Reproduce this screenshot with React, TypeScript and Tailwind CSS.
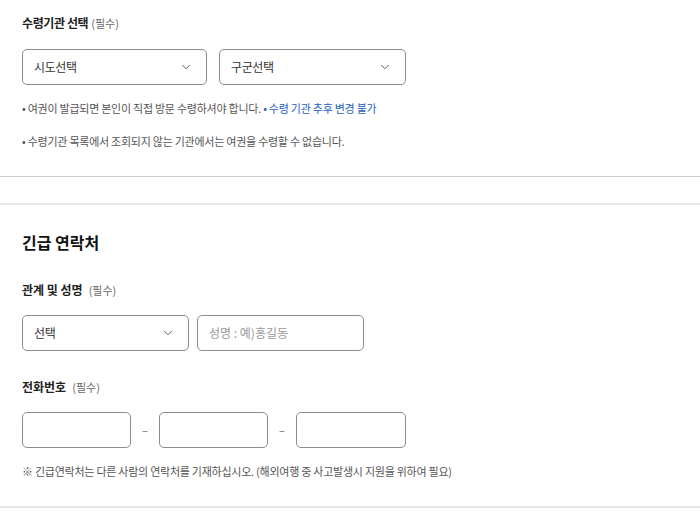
import React from "react";
import { ChevronDown } from "lucide-react";

const font = { fontFamily: '"Noto Sans CJK KR", "Noto Sans", sans-serif' };

function SelectBox({ label, width }: { label: string; width: string }) {
  return (
    <div className={`${width} h-[36px] flex items-center justify-between pl-[11px] pr-[13px] border border-[#8c8c8c] rounded-[5px] bg-white`}>
      <span className="text-[12px] tracking-[-0.4px] text-[#333]">{label}</span>
      <ChevronDown size={14} strokeWidth={1.6} className="text-[#555]" />
    </div>
  );
}

function Required() {
  return <span className="text-[11px] font-normal text-[#666] ml-[6px]">(필수)</span>;
}

export default function App() {
  return (
    <div className="w-[700px] h-[526px] bg-white overflow-hidden" style={font}>
      <section className="pl-[22px] pt-[14px] pb-[27px] border-b border-[#d0d0d0]">
        <h3 className="text-[12px] leading-[18px] font-bold tracking-[-0.4px] text-[#222]">
          수령기관 선택<span className="text-[11px] font-normal text-[#666] ml-[3px] tracking-normal">(필수)</span>
        </h3>
        <div className="flex gap-[12px] mt-[17px]">
          <SelectBox label="시도선택" width="w-[185px]" />
          <SelectBox label="구군선택" width="w-[187px]" />
        </div>
        <p className="mt-[15px] text-[11px] leading-[16px] tracking-[-0.25px] text-[#555]">
          • 여권이 발급되면 본인이 직접 방문 수령하셔야 합니다. <span className="text-[#1f5fbf]">• 수령 기관 추후 변경 불가</span>
        </p>
        <p className="mt-[17px] text-[11px] leading-[16px] tracking-[-0.25px] text-[#555]">
          • 수령기관 목록에서 조회되지 않는 기관에서는 여권을 수령할 수 없습니다.
        </p>
      </section>

      <div className="h-[26px]" />

      <section className="pl-[22px] pt-[26px] pb-[27px] border-t-2 border-b-2 border-[#e6e6e6]">
        <h2 className="text-[16px] leading-[22px] font-bold text-[#111]">긴급 연락처</h2>

        <h3 className="mt-[28px] text-[12px] leading-[18px] font-bold text-[#222]">
          관계 및 성명<Required />
        </h3>
        <div className="flex gap-[8px] mt-[16px]">
          <SelectBox label="선택" width="w-[167px]" />
          <div className="w-[167px] h-[36px] flex items-center pl-[11px] border border-[#8c8c8c] rounded-[5px]">
            <span className="text-[12px] text-[#999]">성명 : 예)홍길동</span>
          </div>
        </div>

        <h3 className="mt-[27px] text-[12px] leading-[18px] font-bold text-[#222]">
          전화번호<Required />
        </h3>
        <div className="flex items-center mt-[16px]">
          <div className="w-[109px] h-[36px] border border-[#8c8c8c] rounded-[5px]" />
          <span className="w-[28px] text-center text-[11px] text-[#666]">–</span>
          <div className="w-[109px] h-[36px] border border-[#8c8c8c] rounded-[5px]" />
          <span className="w-[28px] text-center text-[11px] text-[#666]">–</span>
          <div className="w-[110px] h-[36px] border border-[#8c8c8c] rounded-[5px]" />
        </div>

        <p className="mt-[15px] text-[11px] leading-[16px] tracking-[-0.25px] text-[#555]">
          ※ 긴급연락처는 다른 사람의 연락처를 기재하십시오. (해외여행 중 사고발생시 지원을 위하여 필요)
        </p>
      </section>
    </div>
  );
}
